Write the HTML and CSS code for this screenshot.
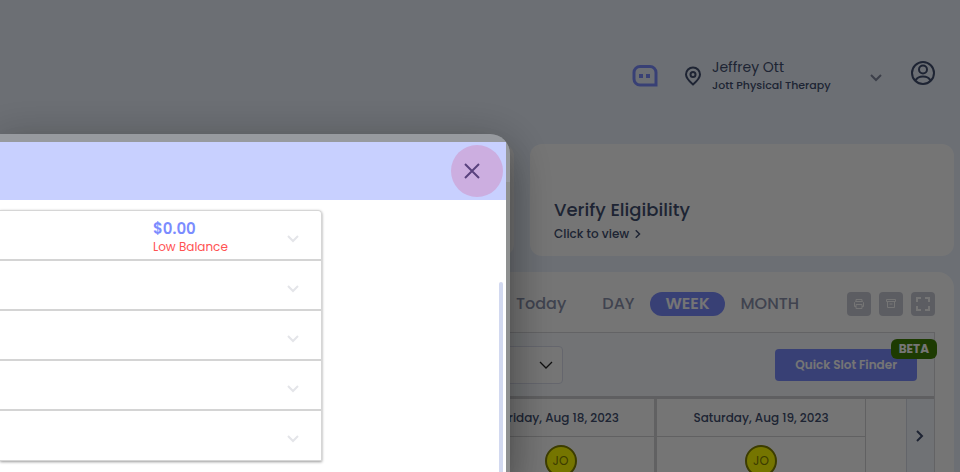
FILE: index.html
```html
<!DOCTYPE html>
<html lang="en">

<head>
  <meta charset="UTF-8">
  <meta name="viewport" content="width=device-width, initial-scale=1.0">
  <title>Jott Physical Therapy</title>
  <link rel="stylesheet" href="styles.css">
</head>

<body>
  <svg width="0" height="0" class="sprite">
    <symbol id="chevron" viewBox="0 0 12 8">
      <path d="M1 1l5 5 5-5" fill="none" stroke="currentColor" stroke-width="2"/>
    </symbol>
    <symbol id="chevron-right" viewBox="0 0 8 12">
      <path d="M1 1l5 5-5 5" fill="none" stroke="currentColor" stroke-width="2"/>
    </symbol>
  </svg>

  <header class="topbar">
    <a href="#" class="bot" aria-label="Assistant">
      <svg width="26" height="24" viewBox="0 0 26 24">
        <path d="M8 2.500h10a6 6 0 0 1 6 6v12.500H8a6 6 0 0 1-6-6V8.500a6 6 0 0 1 6-6z" fill="none" stroke="currentColor" stroke-width="3"/>
        <path d="M7 10h4v4H7zM14 10h4v4h-4z" fill="currentColor"/>
      </svg>
    </a>
    <button class="location">
      <svg width="18" height="20" viewBox="0 0 18 20" fill="none" stroke="currentColor" stroke-width="2">
        <path d="M9 18.500C5 15 2 12 2 8.500a7 7 0 0 1 14 0C16 12 13 15 9 18.500z"/>
        <circle cx="9" cy="8.500" r="2.500"/>
      </svg>
      <span class="names">
        <span class="user">Jeffrey Ott</span>
        <span class="clinic">Jott Physical Therapy</span>
      </span>
      <svg class="caret" width="12" height="8"><use href="#chevron"/></svg>
    </button>
    <a href="#" class="account" aria-label="Account">
      <svg width="24" height="24" viewBox="0 0 24 24" fill="none" stroke="currentColor" stroke-width="2">
        <circle cx="12" cy="12" r="11"/>
        <circle cx="12" cy="8.500" r="4"/>
        <path d="M4.500 19.500c1.500-3 4-4 7.500-4s6 1 7.500 4"/>
      </svg>
    </a>
  </header>

  <main>
    <div class="cards">
      <section class="card"></section>
      <section class="card">
        <h2>Verify Eligibility</h2>
        <a href="#">Click to view <svg width="6" height="10" viewBox="0 0 8 12"><use href="#chevron-right"/></svg></a>
      </section>
    </div>

    <section class="calendar">
      <div class="views">
        <button class="today">Today</button>
        <button>DAY</button>
        <button class="active">WEEK</button>
        <button>MONTH</button>
        <div class="tools">
          <button aria-label="Print">
            <svg width="12" height="12" viewBox="0 0 12 12" fill="none" stroke="currentColor">
              <path d="M3 3.500v-2h6v2M3 8.500H1.500v-4l1-1h7l1 1v4H9M3 6.500h6v4H3z"/>
            </svg>
          </button>
          <button aria-label="Archive">
            <svg width="12" height="12" viewBox="0 0 12 12" fill="none" stroke="currentColor">
              <path d="M1.500 1.500h9v2h-9zM2.500 3.500v6h7v-6M4.500 6h3"/>
            </svg>
          </button>
          <button aria-label="Full screen">
            <svg width="16" height="16" viewBox="0 0 16 16" fill="none" stroke="currentColor" stroke-width="2">
              <path d="M2 6V2h4M10 2h4v4M14 10v4h-4M6 14H2v-4"/>
            </svg>
          </button>
        </div>
      </div>

      <div class="board">
        <div class="filters">
          <select aria-label="Provider"></select>
          <svg class="select-caret" width="14" height="8" viewBox="0 0 14 8" fill="none" stroke="currentColor">
            <path d="M1 1l6 6 6-6" stroke-width="1.300"/>
          </svg>
          <div class="finder">
            <button>Quick Slot Finder</button>
            <span class="beta">BETA</span>
          </div>
        </div>
        <div class="week">
          <table>
            <colgroup>
              <col>
              <col class="friday">
              <col class="saturday">
            </colgroup>
            <tr>
              <th></th>
              <th>Friday, Aug 18, 2023</th>
              <th>Saturday, Aug 19, 2023</th>
            </tr>
            <tr>
              <td></td>
              <td><span class="avatar">JO</span></td>
              <td><span class="avatar">JO</span></td>
            </tr>
          </table>
          <button class="next" aria-label="Next week"><svg width="8" height="12"><use href="#chevron-right"/></svg></button>
        </div>
      </div>
    </section>
  </main>

  <div class="overlay">
    <div class="dialog" role="dialog" aria-label="Balance">
      <div class="dialog-head">
        <button class="close" aria-label="Close">
          <svg width="16" height="16" viewBox="0 0 16 16">
            <path d="M1 1l14 14M15 1L1 15" stroke="currentColor" stroke-width="2"/>
          </svg>
        </button>
      </div>
      <div class="dialog-body">
        <ul class="rows">
          <li>
            <div class="balance">
              <span class="amount">$0.00</span>
              <span class="low">Low Balance</span>
            </div>
            <button aria-label="Expand"><svg width="12" height="8"><use href="#chevron"/></svg></button>
          </li>
          <li><button aria-label="Expand"><svg width="12" height="8"><use href="#chevron"/></svg></button></li>
          <li><button aria-label="Expand"><svg width="12" height="8"><use href="#chevron"/></svg></button></li>
          <li><button aria-label="Expand"><svg width="12" height="8"><use href="#chevron"/></svg></button></li>
          <li><button aria-label="Expand"><svg width="12" height="8"><use href="#chevron"/></svg></button></li>
        </ul>
        <div class="thumb"></div>
      </div>
    </div>
  </div>
</body>

</html>
```
FILE: styles.css
```css
* {
  box-sizing: border-box;
  margin: 0;
  padding: 0;
}

body {
  display: flex;
  flex-direction: column;
  height: 100vh;
  overflow: hidden;
  background-color: #ebf2fd;
  color: #424f70;
  font-family: Poppins, Inter, "Open Sans", sans-serif;
  font-size: 12px;
}

button {
  background: none;
  border: none;
  color: inherit;
  font: inherit;
  cursor: pointer;
}

a {
  color: inherit;
  text-decoration: none;
}

svg {
  display: block;
  flex: none;
}

.sprite {
  position: absolute;
}

.topbar {
  display: flex;
  flex: none;
  justify-content: flex-end;
  align-items: center;
  height: 144px;
  padding: 8px 25px 0 0;
}

.bot {
  color: #7b8cff;
}

.location {
  display: flex;
  align-items: center;
  width: 198px;
  margin-left: 26px;
  text-align: left;
}

.names {
  flex: 1;
  margin-left: 10px;
}

.user, .clinic {
  display: block;
  line-height: 18px;
}

.user {
  font-size: 14px;
}

.clinic {
  font-size: 11px;
  font-weight: 500;
}

.caret {
  margin-top: 3px;
  color: #8389a0;
}

.account {
  margin: 0 0 6px 29px;
}

main {
  display: flex;
  flex: 1;
  flex-direction: column;
  min-height: 0;
  padding-right: 6px;
}

.cards {
  display: flex;
  flex: none;
  gap: 16px;
}

.card {
  flex: 1;
  height: 112px;
  padding: 54px 24px 0;
  border-radius: 12px;
  background-color: #fff;
}

.card:last-child {
  flex: 0 0 424px;
}

.card h2 {
  font-size: 18px;
  font-weight: 500;
  line-height: 24px;
}

.card a {
  display: inline-flex;
  align-items: center;
  gap: 6px;
  font-weight: 500;
  line-height: 24px;
}

.calendar {
  display: flex;
  flex: 1;
  flex-direction: column;
  min-height: 0;
  margin-top: 16px;
  padding-right: 19px;
  border-radius: 16px 16px 0 0;
  background-color: #fff;
}

.views {
  display: flex;
  flex: none;
  justify-content: flex-end;
  align-items: center;
  height: 60px;
  padding-top: 4px;
  color: #8b92ad;
  font-size: 16px;
  font-weight: 500;
}

.views button {
  height: 24px;
  padding: 0 16px;
  border-radius: 12px;
  line-height: 24px;
}

.views .today {
  margin-right: 4px;
}

.views .active {
  padding: 0 15px;
  background-color: #7b8cff;
  color: #fff;
  font-weight: 600;
}

.tools {
  display: flex;
  gap: 8px;
  margin-left: 32px;
}

.tools button {
  display: flex;
  justify-content: center;
  align-items: center;
  width: 24px;
  padding: 0;
  border-radius: 4px;
  background-color: #c9cbd6;
  color: #fff;
}

.board {
  display: flex;
  flex: 1;
  flex-direction: column;
  min-height: 0;
  border: 1px solid #d8d8dc;
  border-bottom: none;
}

.filters {
  position: relative;
  display: flex;
  flex: none;
  justify-content: space-between;
  align-items: center;
  height: 66px;
  padding-right: 17px;
  border-bottom: 3px solid #d0d0d3;
  background-color: #f8fbff;
}

.filters select {
  width: 562px;
  height: 38px;
  border: 1px solid #dcdfee;
  border-radius: 4px;
  background-color: #fff;
  appearance: none;
}

.select-caret {
  position: absolute;
  left: 538px;
  color: #222;
}

.finder {
  position: relative;
}

.finder button {
  height: 32px;
  padding: 0 20px;
  border-radius: 4px;
  background-color: #7b8cff;
  color: #fff;
  font-weight: 600;
}

.beta {
  position: absolute;
  top: -10px;
  right: -20px;
  padding: 0 8px;
  border-radius: 6px;
  background-color: #418205;
  color: #fff;
  font-weight: 700;
  line-height: 20px;
}

.week {
  display: flex;
  flex: 1;
  min-height: 0;
  overflow: hidden;
}

.week table {
  flex: 1;
  margin-right: 40px;
  border-spacing: 0;
  table-layout: fixed;
}

.friday {
  width: 190px;
}

.saturday {
  width: 209px;
}

th, td {
  border-right: 3px solid #d4d4d6;
}

th:last-child, td:last-child {
  border-right-width: 1px;
}

th {
  height: 38px;
  border-bottom: 1px solid #d4d4d6;
  font-weight: 500;
}

td {
  padding-top: 8px;
  vertical-align: top;
}

.avatar {
  display: block;
  width: 32px;
  height: 32px;
  margin: 0 auto;
  border: 2px solid #848400;
  border-radius: 50%;
  background-color: #ffff00;
  color: #848400;
  line-height: 28px;
  text-align: center;
}

.next {
  width: 28px;
  padding-left: 9px;
  border-left: 1px solid #d8dce6;
  background-color: #f5f9ff;
}

/* modal */
.overlay {
  position: fixed;
  inset: 0;
  padding: 134px 450px 0 0;
  background-color: rgba(0, 0, 0, 0.54);
}

.dialog {
  display: flex;
  flex-direction: column;
  height: 100%;
  padding: 8px 4px 0 0;
  border-radius: 0 20px 0 0;
  background: linear-gradient(#979a9f 48px, #8e9090 48px);
  box-shadow: 0 11px 15px -7px rgba(0, 0, 0, 0.2), 0 24px 38px 3px rgba(0, 0, 0, 0.2), 0 9px 46px 8px rgba(0, 0, 0, 0.2);
}

.dialog-head {
  display: flex;
  flex: none;
  justify-content: flex-end;
  align-items: center;
  height: 58px;
  padding-right: 3px;
  background-color: #c8d0ff;
}

.close {
  display: flex;
  align-items: center;
  width: 52px;
  height: 52px;
  padding-left: 13px;
  border-radius: 50%;
  background-color: #ccaee0;
  color: #59427e;
}

.dialog-body {
  display: flex;
  justify-content: space-between;
  flex: 1;
  min-height: 0;
  padding: 10px 3px 0 0;
  background-color: #fff;
}

.rows {
  flex: none;
  width: 322px;
  height: 251px;
  border: 1px solid #d6d6d6;
  border-left: none;
  border-radius: 0 4px 0 0;
  box-shadow: 0 1px 3px rgba(0, 0, 0, 0.4);
  list-style: none;
}

.rows li {
  display: flex;
  justify-content: flex-end;
  align-items: center;
  height: 50px;
  padding: 4px 22px 0 0;
  border-bottom: 2px solid #d4d4d4;
}

.rows li:last-child {
  height: 48px;
  border-bottom: none;
}

.rows button {
  padding-top: 3px;
  color: #e4e5e9;
}

.balance {
  width: 134px;
  padding-top: 2px;
}

.balance span {
  display: block;
  line-height: 18px;
}

.balance .amount {
  color: #7b8cff;
  font-size: 15px;
  font-weight: 600;
}

.balance .low {
  color: #ff5252;
}

.thumb {
  width: 4px;
  margin-top: 72px;
  border-radius: 4px 4px 0 0;
  background-color: #d2d9f0;
}
```
